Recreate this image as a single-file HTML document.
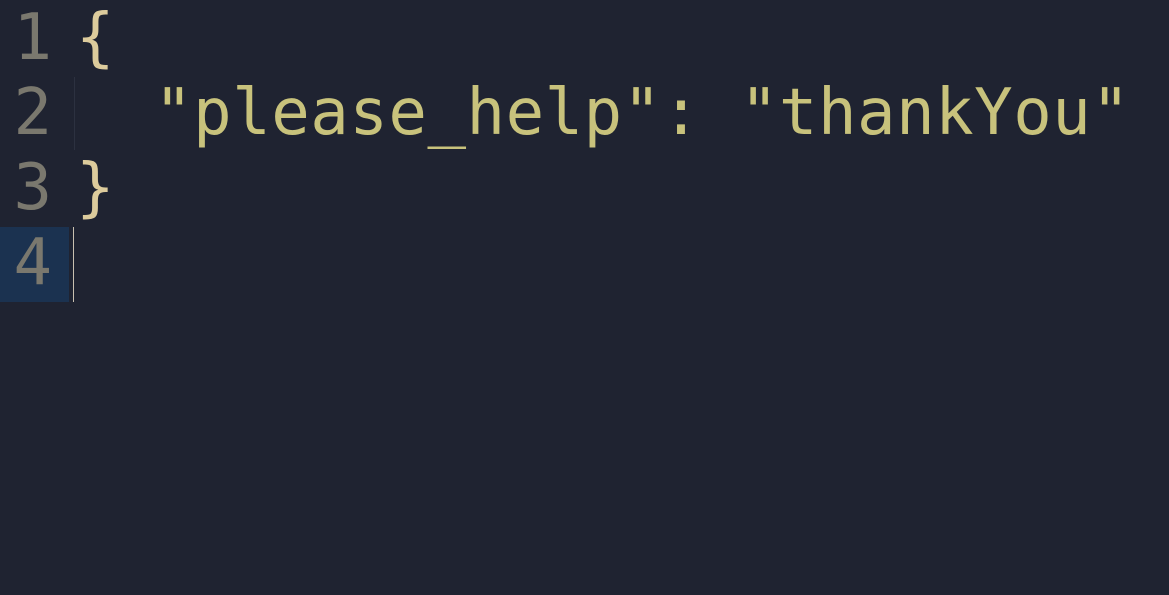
<!DOCTYPE html>
<html><head><style>
html,body{margin:0;padding:0;background:#1f2331;width:1169px;height:595px;overflow:hidden}
.l{position:absolute;left:0;height:75px;width:1169px;font-family:"DejaVu Sans Mono","Liberation Mono",monospace;font-size:64px;line-height:75px;white-space:pre}
.n{position:absolute;left:0;width:52px;text-align:right;color:#7a786e}
.t{position:absolute;left:76px;letter-spacing:0.52px}
.b{color:#dccb9c}.s{color:#c8c27c}
</style></head><body>
<div style="position:absolute;left:0;top:227px;width:69px;height:75px;background:#1b3250"></div>
<div style="position:absolute;left:74px;top:77px;width:1px;height:73px;background:#2c3140"></div>
<div style="position:absolute;left:73px;top:227px;width:1px;height:75px;background:#c8c0b0"></div>
<div class="l" style="top:1px"><span class="n">1</span><span class="t b">{</span></div>
<div class="l" style="top:76px"><span class="n">2</span><span class="t s">  "please_help": "thankYou"</span></div>
<div class="l" style="top:151px"><span class="n">3</span><span class="t b">}</span></div>
<div class="l" style="top:226px"><span class="n">4</span></div>
</body></html>
